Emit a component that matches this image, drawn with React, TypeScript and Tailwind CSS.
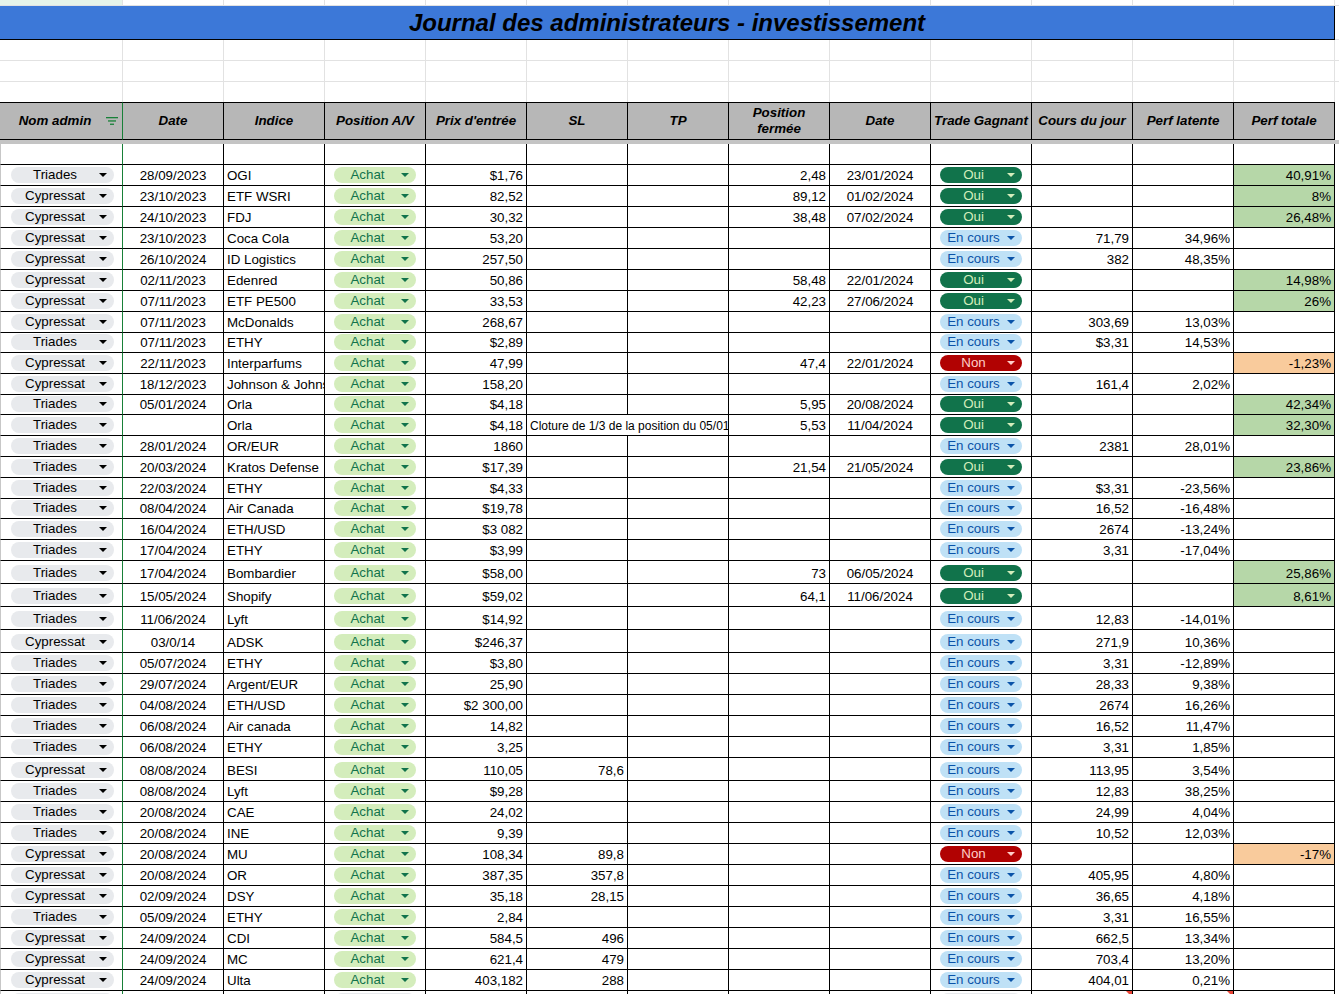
import { clsx } from "clsx"

type Kind = "gray" | "achat" | "oui" | "non" | "cours"

const chipStyles: Record<Kind, string> = {
  gray: "bg-[#e8eaed] text-black",
  achat: "bg-[#d4edbc] text-[#11734b]",
  oui: "bg-[#11734b] text-[#d4edbc]",
  non: "bg-[#b10202] text-[#ffcfc9]",
  cours: "bg-[#bfe1f6] text-[#0a53a8]",
}

const tradeKinds: Record<string, { kind: Kind; label: string }> = {
  O: { kind: "oui", label: "Oui" },
  N: { kind: "non", label: "Non" },
  C: { kind: "cours", label: "En cours" },
}

const heights: Record<number, string> = {
  20: "h-[20px]",
  21: "h-[21px]",
  23: "h-[23px]",
}

// admin|date|indice|prix|sl|fermee|date2|trade|cours|latente|totale
const rows = [
  "T|28/09/2023|OGI|$1,76||2,48|23/01/2024|O|||40,91%",
  "C|23/10/2023|ETF WSRI|82,52||89,12|01/02/2024|O|||8%",
  "C|24/10/2023|FDJ|30,32||38,48|07/02/2024|O|||26,48%",
  "C|23/10/2023|Coca Cola|53,20||||C|71,79|34,96%|",
  "C|26/10/2024|ID Logistics|257,50||||C|382|48,35%|",
  "C|02/11/2023|Edenred|50,86||58,48|22/01/2024|O|||14,98%",
  "C|07/11/2023|ETF PE500|33,53||42,23|27/06/2024|O|||26%",
  "C|07/11/2023|McDonalds|268,67||||C|303,69|13,03%|",
  "T|07/11/2023|ETHY|$2,89||||C|$3,31|14,53%|",
  "C|22/11/2023|Interparfums|47,99||47,4|22/01/2024|N|||-1,23%",
  "C|18/12/2023|Johnson & Johnson|158,20||||C|161,4|2,02%|",
  "T|05/01/2024|Orla|$4,18||5,95|20/08/2024|O|||42,34%",
  "T||Orla|$4,18|NOTE|5,53|11/04/2024|O|||32,30%",
  "T|28/01/2024|OR/EUR|1860||||C|2381|28,01%|",
  "T|20/03/2024|Kratos Defense|$17,39||21,54|21/05/2024|O|||23,86%",
  "T|22/03/2024|ETHY|$4,33||||C|$3,31|-23,56%|",
  "T|08/04/2024|Air Canada|$19,78||||C|16,52|-16,48%|",
  "T|16/04/2024|ETH/USD|$3 082||||C|2674|-13,24%|",
  "T|17/04/2024|ETHY|$3,99||||C|3,31|-17,04%|",
  "T|17/04/2024|Bombardier|$58,00||73|06/05/2024|O|||25,86%",
  "T|15/05/2024|Shopify|$59,02||64,1|11/06/2024|O|||8,61%",
  "T|11/06/2024|Lyft|$14,92||||C|12,83|-14,01%|",
  "C|03/0/14|ADSK|$246,37||||C|271,9|10,36%|",
  "T|05/07/2024|ETHY|$3,80||||C|3,31|-12,89%|",
  "T|29/07/2024|Argent/EUR|25,90||||C|28,33|9,38%|",
  "T|04/08/2024|ETH/USD|$2 300,00||||C|2674|16,26%|",
  "T|06/08/2024|Air canada|14,82||||C|16,52|11,47%|",
  "T|06/08/2024|ETHY|3,25||||C|3,31|1,85%|",
  "C|08/08/2024|BESI|110,05|78,6|||C|113,95|3,54%|",
  "T|08/08/2024|Lyft|$9,28||||C|12,83|38,25%|",
  "T|20/08/2024|CAE|24,02||||C|24,99|4,04%|",
  "T|20/08/2024|INE|9,39||||C|10,52|12,03%|",
  "C|20/08/2024|MU|108,34|89,8|||N|||-17%",
  "C|20/08/2024|OR|387,35|357,8|||C|405,95|4,80%|",
  "C|02/09/2024|DSY|35,18|28,15|||C|36,65|4,18%|",
  "T|05/09/2024|ETHY|2,84||||C|3,31|16,55%|",
  "C|24/09/2024|CDI|584,5|496|||C|662,5|13,34%|",
  "C|24/09/2024|MC|621,4|479|||C|703,4|13,20%|",
  "C|24/09/2024|Ulta|403,182|288|||C|404,01|0,21%|",
]

// row heights that differ from 21px (1-based index)
const rowHeight: Record<number, number> = { 9: 20, 12: 20, 17: 20, 20: 23, 21: 23, 22: 23, 23: 23, 29: 23 }

const headers = [
  "Date",
  "Indice",
  "Position A/V",
  "Prix d'entrée",
  "SL",
  "TP",
  "Position fermée",
  "Date",
  "Trade Gagnant",
  "Cours du jour",
  "Perf latente",
  "Perf totale",
]

const grid = "grid grid-cols-[123px_repeat(12,101px)]"
const cell = "flex items-end overflow-hidden whitespace-nowrap border-r border-b border-black pb-[1px] leading-4"
const first = "border-l border-r border-b border-black border-l-[#c7c7c7] border-r-[#188038]"

function Caret({ className }: { className?: string }) {
  return (
    <svg width="8" height="4" viewBox="0 0 8 4" className={className}>
      <polygon points="0,0 8,0 4,4" fill="currentColor" />
    </svg>
  )
}

function Chip({ label, kind, wide }: { label: string; kind: Kind; wide?: boolean }) {
  return (
    <div
      className={clsx(
        "flex h-4 shrink-0 items-center rounded-full",
        wide ? "ml-[10px] w-[103px]" : "ml-[9px] w-[82px]",
        chipStyles[kind]
      )}
    >
      <span className="flex-1 text-center leading-4">{label}</span>
      <Caret className="mr-[7px]" />
    </div>
  )
}

function FilterIcon() {
  return (
    <svg width="12" height="8" viewBox="0 0 12 8" className="mr-[4px] shrink-0">
      <rect x="0" y="0" width="12" height="1.3" fill="#188038" />
      <rect x="2" y="3.3" width="8" height="1.3" fill="#188038" />
      <rect x="4" y="6.6" width="4" height="1.3" fill="#188038" />
    </svg>
  )
}

function GridRow({ className, cellClass }: { className: string; cellClass: string }) {
  return (
    <div className={clsx("flex", className)}>
      {Array.from({ length: 13 }).map((_, i) => (
        <div
          key={i}
          className={clsx(cellClass, i === 0 ? "w-[123px]" : "w-[101px]", "shrink-0")}
        />
      ))}
      <div className={clsx(cellClass, "flex-1 border-r-0")} />
    </div>
  )
}

function DataRow({ line, index }: { line: string; index: number }) {
  const [admin, date, indice, prix, sl, fermee, date2, trade, cours, lat, tot] = line.split("|")
  const h = heights[rowHeight[index] ?? 21]
  const t = tradeKinds[trade]
  return (
    <div className={clsx(grid, h)}>
      <div className={clsx(first, "flex items-end pb-[2px]")}>
        <Chip label={admin === "T" ? "Triades" : "Cypressat"} kind="gray" wide />
      </div>
      <div className={clsx(cell, "justify-center")}>{date}</div>
      <div className={clsx(cell, "pl-[3px]")}>{indice}</div>
      <div className={clsx(cell, "pb-[2px]")}>
        <Chip label="Achat" kind="achat" />
      </div>
      <div className={clsx(cell, "justify-end pr-[3px]")}>{prix}</div>
      {sl === "NOTE" ? (
        <div className={clsx(cell, "col-span-2 pl-[3px] text-[12px]")}>
          Cloture de 1/3 de la position du 05/01/2024
        </div>
      ) : (
        <>
          <div className={clsx(cell, "justify-end pr-[3px]")}>{sl}</div>
          <div className={cell} />
        </>
      )}
      <div className={clsx(cell, "justify-end pr-[3px]")}>{fermee}</div>
      <div className={clsx(cell, "justify-center")}>{date2}</div>
      <div className={clsx(cell, "pb-[2px]")}>
        <Chip label={t.label} kind={t.kind} />
      </div>
      <div className={clsx(cell, "justify-end pr-[3px]")}>{cours}</div>
      <div className={clsx(cell, "justify-end pr-[3px]")}>{lat}</div>
      <div
        className={clsx(
          cell,
          "justify-end pr-[3px]",
          tot && (tot.startsWith("-") ? "bg-[#f9cb9c]" : "bg-[#b6d7a8]")
        )}
      >
        {tot}
      </div>
    </div>
  )
}

function LastRow() {
  return (
    <div className={clsx(grid, "h-[21px]")}>
      <div className={clsx(first, "flex items-start pt-[2px]")}>
        <div className="ml-[10px] h-4 w-[103px] rounded-full bg-[#e8eaed]" />
      </div>
      <div className={cell} />
      <div className={cell} />
      <div className={clsx(cell, "items-start pt-[2px]")}>
        <div className="ml-[9px] h-4 w-[82px] rounded-full bg-[#e8eaed]" />
      </div>
      {Array.from({ length: 5 }).map((_, i) => (
        <div key={i} className={cell} />
      ))}
      <div className={clsx(cell, "items-start pt-[2px]")}>
        <div className="ml-[9px] h-4 w-[82px] rounded-full bg-[#e8eaed]" />
      </div>
      <div className={clsx(cell, "relative")}>
        <span className="absolute right-0 top-0 h-0 w-0 border-l-[6px] border-t-[6px] border-l-transparent border-t-[#ea4335]" />
      </div>
      <div className={clsx(cell, "relative")}>
        <span className="absolute right-0 top-0 h-0 w-0 border-l-[6px] border-t-[6px] border-l-transparent border-t-[#ea4335]" />
      </div>
      <div className={cell} />
    </div>
  )
}

export default function App() {
  return (
    <div className="h-[994px] w-[1339px] overflow-hidden bg-white font-['Liberation_Sans',Arial,sans-serif] text-[13.33px] text-black">
      <div className="flex h-[6px]">
        <div className="w-[123px] shrink-0 border-r border-b border-[#e2e2e2] bg-[#e6f4ea]" />
        {Array.from({ length: 12 }).map((_, i) => (
          <div key={i} className="w-[101px] shrink-0 border-r border-b border-[#e2e2e2]" />
        ))}
        <div className="flex-1 border-b border-[#e2e2e2]" />
      </div>
      <div className="flex h-[34px]">
        <div className="flex w-[1335px] shrink-0 items-center justify-center border-r border-b border-black bg-[#3c78d8] text-[24px] font-bold italic">
          Journal des administrateurs - investissement
        </div>
        <div className="flex-1 border-b border-[#e2e2e2]" />
      </div>
      <GridRow className="h-[21px]" cellClass="border-r border-b border-[#e2e2e2]" />
      <GridRow className="h-[21px]" cellClass="border-r border-b border-[#e2e2e2]" />
      <GridRow className="h-[20px]" cellClass="border-r border-[#e2e2e2]" />

      <div className={clsx(grid, "h-[38px] font-bold italic")}>
        <div className="flex items-center border-t border-b border-r border-black border-r-[#188038] bg-[#b7b7b7]">
          <span className="flex-1 pl-[4px] text-center leading-4">Nom admin</span>
          <FilterIcon />
        </div>
        {headers.map((h, i) => (
          <div
            key={i}
            className="flex items-center justify-center border-t border-b border-r border-black bg-[#b7b7b7] text-center leading-4"
          >
            {h === "Position fermée" ? (
              <span>
                Position
                <br />
                fermée
              </span>
            ) : (
              h
            )}
          </div>
        ))}
      </div>
      <div className="h-[4px] w-full bg-[#c4c4c4]" />

      <div className={clsx(grid, "h-[21px]")}>
        <div className={first} />
        {Array.from({ length: 12 }).map((_, i) => (
          <div key={i} className={cell} />
        ))}
      </div>

      {rows.map((line, i) => (
        <DataRow key={i} line={line} index={i + 1} />
      ))}
      <LastRow />
    </div>
  )
}
